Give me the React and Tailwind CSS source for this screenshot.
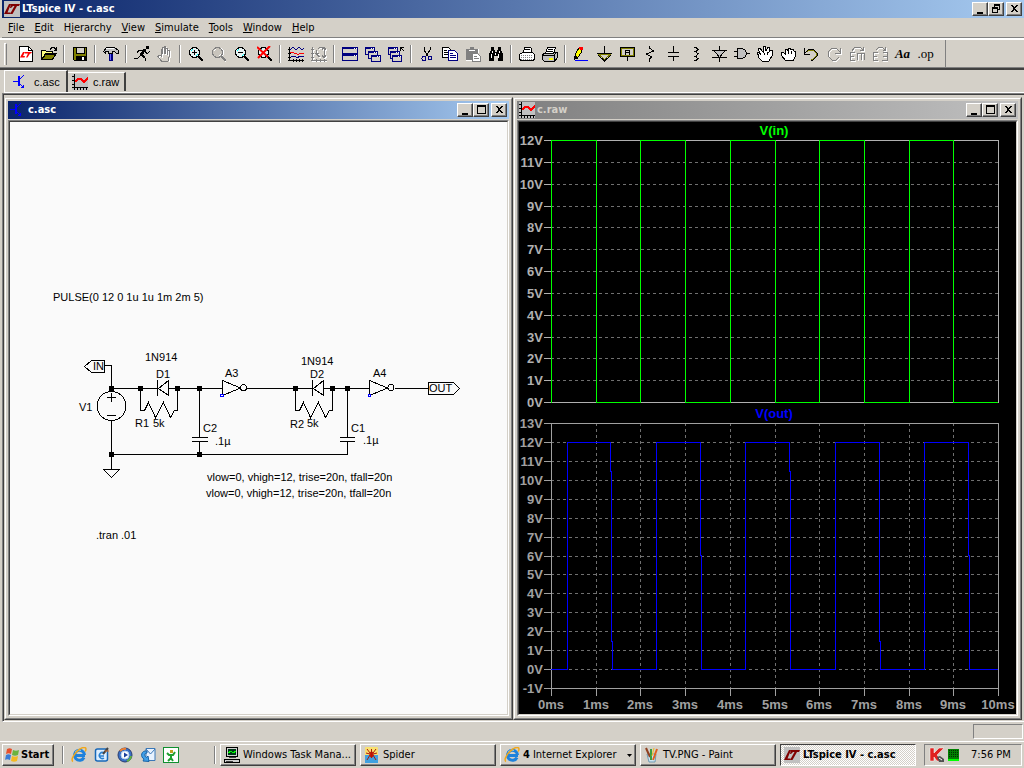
const raised =
  'border border-t-white border-l-white border-r-[#404040] border-b-[#404040] shadow-[inset_-1px_-1px_#808080]';

const Svg = ({ children, className = '' }) => (
  <svg viewBox="0 0 16 16" className={`w-4 h-4 shrink-0 ${className}`} fill="none" stroke="#000" shapeRendering="crispEdges" aria-hidden="true">
    {children}
  </svg>
);

// Greyed drawing with the white edge that disabled tools have
const Disabled = ({ d, fill = 'none' }) => (
  <Svg>
    <path d={d} stroke="#fff" fill={fill === 'none' ? 'none' : '#fff'} transform="translate(1 1)" />
    <path d={d} stroke="#808080" fill={fill} />
  </Svg>
);

const LogoIcon = () => (
  <Svg>
    <path d="M0 0h16v16H0z" fill="#c0c0c0" stroke="none" />
    <path d="M0 13L5 3h2L3.500 11.500h3L6 13zM7 3h9l-1 2h-2l-4.500 8H6l4.500-8H9l-2 2H6z" fill="#800000" stroke="none" shapeRendering="auto" />
  </Svg>
);

const SchematicIcon = () => (
  <Svg>
    <path d="M0 7.500h5M5 2v10M6 2v10M6 6l5-5M6 9l5 5" stroke="#00f" />
    <path d="M7 14h4v-4z" fill="#00f" stroke="none" />
  </Svg>
);

const WaveIcon = () => (
  <Svg>
    <path d="M0 0h16v16H0z" fill="#c0c0c0" stroke="none" />
    <path d="M2.500 0v16M0 13.500h16M0 2.500h3M0 6.500h3M0 10.500h3M5.500 13v3M8.500 13v3M11.500 13v3M14.500 13v3" />
    <path d="M3 8l3-3h3l3 3 4-4" stroke="#f00" strokeWidth="2" />
  </Svg>
);

const Lens = ({ children, dim }) => (
  <Svg>
    {dim && <path d="M5 2h5l2 2v5l-2 2 5 5" stroke="#fff" />}
    <circle cx="6.500" cy="6.500" r="5" stroke={dim ? '#808080' : '#000'} fill={dim ? '#c8c4bc' : '#e8f4f4'} />
    <path d="M3 5l2-2M8 10l2-2" stroke={dim ? '#fff' : '#0ff'} />
    <path d="M10 10l5 5" stroke={dim ? '#808080' : '#000'} strokeWidth="2" />
    {children}
  </Svg>
);

const Pane = ({ x, y, w = 9, h = 7 }) => (
  <g>
    <rect x={x + 0.5} y={y + 0.5} width={w} height={h} fill="#d4d0c8" stroke="#000080" />
    <path d={`M${x} ${y + 1}h${w + 1}`} stroke="#000080" strokeWidth="2" />
    <path d={`M${x + w - 3} ${y + 1.5}h1m1 0h1`} stroke="#fff" />
  </g>
);

const NewIcon = () => (
  <Svg>
    <path d="M1.500 .5h9l4 4v11h-13z" fill="#fff" />
    <path d="M10.500 .5v4h4" />
    <path d="M2 11.500L5 6h2l-2 4h2l-.5 1.500zM7 6h7l-1 1.500h-1L9.500 11.500H8l2-4H7z" fill="#f00" stroke="none" shapeRendering="auto" />
  </Svg>
);

const OpenIcon = () => (
  <Svg>
    <path d="M.5 13.500v-9h4l1 1h6v2M.5 13.500l4-6h11l-4 6z" fill="#ffff80" />
    <path d="M1 13.500l4-5.500h10l-4 5.500z" fill="#808000" />
    <path d="M9 3.500l2-2h2l2 2M15.500 1v3h-3" />
  </Svg>
);

const SaveIcon = () => (
  <Svg>
    <path d="M1.500 1.500h13v13h-12l-1-1z" fill="#808000" />
    <path d="M4.500 1.500h8v6h-8z" fill="#d4d0c8" />
    <path d="M4 10h9v4H4z" fill="#000" />
    <path d="M10 11h2v3h-2z" fill="#fff" stroke="none" />
  </Svg>
);

const HammerIcon = () => (
  <Svg>
    <path d="M.5 5.500l3-4h8l4 3v3h-2l-2-2h-2v2h-4v-2h-3v2z" fill="#c0c0c0" />
    <path d="M3 2.500h8" stroke="#fff" />
    <path d="M6 8h4v7H6z" fill="#000080" stroke="none" />
    <path d="M7.500 8v6" stroke="#66f" />
  </Svg>
);

const RunIcon = () => (
  <Svg>
    <path d="M12 0h3v3h-3z" fill="#000" stroke="none" />
    <path d="M11 3L7 9" strokeWidth="3" />
    <path d="M10 4H5L3 7M11 5l2 3 3-3M7 9l4 3v3M7 9l-3 3H0" />
    <path d="M8 9l3 3" strokeWidth="2" />
  </Svg>
);

const handPath = 'M4.500 15L1 10.500 2 9l2 1V3.500h1.500V8 1.500H7V8 .5h1.500V8 2h1.500v6.500V4h2v7L11 15z';
const StopIcon = () => <Disabled d={handPath} />;

const ZoomInIcon = () => <Lens><path d="M4 6.500h5M6.500 4v5" /></Lens>;
const ZoomPanIcon = () => <Lens dim />;
const ZoomOutIcon = () => <Lens><path d="M4 6.500h5" /></Lens>;
const ZoomFitIcon = () => (
  <Lens>
    <path d="M0 1l11 10M13 0L1 12" stroke="#f00" strokeWidth="2" shapeRendering="auto" />
  </Lens>
);

const PlotIcon = () => (
  <Svg>
    <path d="M1.500 1v14M0 14.500h16M0 3.500h3M0 7.500h3M0 11.500h3M5.500 13v3M8.500 13v3M11.500 13v3M14.500 13v3" />
    <path d="M2 4l3-3 3 3 3-3 3 3 2-2M3 10.500h4l2 1 3-1h4" stroke="#000080" />
    <path d="M2 6.500h4M6 7.500h3M9 8.500h2M11 7.500h5" stroke="#f00" />
  </Svg>
);
const AutoRangeIcon = () => <Disabled d="M1.500 1v13M0 14.500h16M0 3.500h3M0 7.500h3M0 11.500h3M5.500 13v3M9.500 13v3M13.500 13v3M7 2.500l2-1h4M5.500 4v4l3 3M13.500 1v11M11 4l2-3 2 3M11 9l2 3 2-3M4 7.500h4" />;

const TileIcon = () => (
  <Svg><Pane x={0} y={1} w={15} h={6} /><Pane x={0} y={8} w={15} h={6} /></Svg>
);
const CascadeIcon = () => (
  <Svg><Pane x={0} y={1} /><Pane x={3} y={5} /><Pane x={6} y={9} h={6} /></Svg>
);
const CloseAllIcon = () => (
  <Svg>
    <Pane x={0} y={1} /><Pane x={2} y={5} /><Pane x={4} y={9} h={6} />
    <path d="M12.500 5V1.500H16M12 1l4 4" />
  </Svg>
);

const CutIcon = () => (
  <Svg>
    <path d="M5 1v3l4 6M11 1v3l-4 6" />
    <circle cx="5" cy="12.500" r="2" stroke="#000080" />
    <circle cx="11" cy="12" r="2" stroke="#000080" />
  </Svg>
);
const CopyIcon = () => (
  <Svg>
    <path d="M.5 1.500h6l3 3v7h-9z" fill="#fff" />
    <path d="M2 4.500h3M2 6.500h5M2 8.500h5" />
    <path d="M6.500 4.500h6l3 3v7h-9z" fill="#fff" stroke="#000080" />
    <path d="M8 7.500h3M8 9.500h6M8 11.500h6" stroke="#000080" />
  </Svg>
);
const PasteIcon = () => (
  <Svg>
    <path d="M1 3h4V1h4v2h4v11H1z" fill="#808080" stroke="none" />
    <path d="M4 4.500h6M13.500 3v4M1 14.500h6" stroke="#fff" />
    <path d="M7.500 7.500h5l3 3v5h-8z" fill="#fff" stroke="#808080" />
    <path d="M9 10.500h3M9 12.500h5" stroke="#808080" />
  </Svg>
);
const FindIcon = () => (
  <Svg>
    <path d="M3 1h3v3h1v2h2V4h1V1h3v3l2 4v7h-5v-5H6v5H1V8l2-4z" fill="#000" stroke="none" />
    <path d="M4.500 5v2M3.500 8v4M11.500 5v2M10.500 8v4M7.500 7v2" stroke="#fff" />
  </Svg>
);
const PrintPreviewIcon = () => (
  <Svg>
    <path d="M4.500 6.500l1-5h6l1 1v4M5 3.500h6M.5 8.500l3-2h10l2 2v5l-2 1h-11l-2-1z" fill="#fff" />
    <path d="M2 9.500h12M2 11.500h12M2 13.500h12" stroke="#808080" strokeDasharray="1 1" />
  </Svg>
);
const PrintIcon = () => (
  <Svg>
    <path d="M.5 8.500l4-2h11v5l-3 4h-10l-2-2z" fill="#c0c0c0" />
    <path d="M3.500 7.500l2-6h8l-2 6z" fill="#fff" />
    <path d="M6 3.500h5M5 5.500h6M1 9.500h11v5M12 9l3-3" />
    <path d="M7 12h4v2H7z" fill="#ff0" stroke="none" />
  </Svg>
);

const WireIcon = () => (
  <Svg>
    <path d="M1.500 13l1-5 4-7h3l-1 5-4 6z" fill="#ff0" />
    <path d="M6 1h4v3H7z" fill="#f00" stroke="none" />
    <path d="M1 10v4l3-3z" fill="#000" />
    <path d="M2 14.500h13" stroke="#00f" />
  </Svg>
);
const GroundIcon = () => (
  <Svg>
    <path d="M8.500 0v8" />
    <path d="M3 8.500h11l-5.500 5z" stroke="#808000" fill="#d4d0c8" />
    <path d="M1 7.500h15M2 9l6.500 6L15 9" />
  </Svg>
);
const LabelIcon = () => (
  <Svg>
    <rect x="2.500" y="2.500" width="12" height="7" stroke="#808000" />
    <path d="M1.500 1.500h14v9h-14zM8.500 11v4M6.500 9V5l1-1h2l1 1v4M6 6.500h4" />
  </Svg>
);
const ResistorIcon = () => <Svg><path d="M7.500 0v2l4 3-7 3 5 3-2 2v3" /></Svg>;
const CapacitorIcon = () => <Svg><path d="M8.500 0v6M3 6.500h11M3 10.500h11M8.500 10v5" /></Svg>;
const InductorIcon = () => <Svg><path d="M6 1.500h2l2 2-2 2H7l3 2-2 3H7l3 2-2 2H6" /></Svg>;
const DiodeIcon = () => (
  <Svg>
    <path d="M3 4.500h11l-5.500 7z" fill="#c0c0c0" />
    <path d="M8.500 0v4M8.500 11v5M1 11.500h15M1 4.500h15" />
  </Svg>
);
const GateIcon = () => (
  <Svg>
    <path d="M3.500 2.500h5l3 2 1 3-1 3-3 2h-5z" fill="#c0c0c0" />
    <path d="M0 5.500h3M0 10.500h3M12 7.500h4" />
  </Svg>
);
const MoveIcon = () => (
  <Svg>
    <path d="M5 15L1 11V8H0V6h2l2 3-3-6 2-1 3 4V1l2-1 1 5 2-4 2 1-1 4 2-2 2 1-1 5-3 5z" fill="#fff" />
    <path d="M7 7v2M10 6v3" />
  </Svg>
);
const DragIcon = () => (
  <Svg>
    <path d="M5 14l-3-4-1-3 2-1 2 2V3h2l1 2V2h2l1 2 2-1 1 2 2 1-1 5-2 4z" fill="#fff" />
    <path d="M8 5v3M11 5v3" />
  </Svg>
);
const UndoIcon = () => (
  <Svg>
    <path d="M4 6l2-2h4l3 3v3l-3 3H8" stroke="#808000" />
    <path d="M1.500 2v6H7M2 7l4-4h4l4 4v3l-4 4H8" />
  </Svg>
);
const RedoIcon = () => <Disabled d="M14.500 2v5H9M14 6l-4-4H6L2 6v4l4 4h4l3-3" />;
const RotateIcon = () => <Disabled d="M1.500 14V6.500H6M1 10.500h4M1 14.500h5M8.500 14V7.500h7V14M12 8v6M3 5l3-4h5l3 3M14.500 1v3H11" />;
const MirrorIcon = () => <Disabled d="M1.500 15V6.500H6M1 10.500h4M1 14.500h5M15.500 15V6.500H11M15 10.500h-4M15 14.500h-5M4 4l3-3h3l3 3M13.500 1v3H11" />;

const tools = [
  [['New schematic', NewIcon], ['Open', OpenIcon]],
  [['Save', SaveIcon]],
  [['Control panel', HammerIcon]],
  [['Run', RunIcon], ['Halt', StopIcon]],
  [['Zoom in', ZoomInIcon], ['Pan', ZoomPanIcon], ['Zoom out', ZoomOutIcon], ['Zoom full', ZoomFitIcon]],
  [['Pick visible traces', PlotIcon], ['Autorange', AutoRangeIcon]],
  [['Tile windows', TileIcon], ['Cascade windows', CascadeIcon], ['Close all', CloseAllIcon]],
  [['Cut', CutIcon], ['Copy', CopyIcon], ['Paste', PasteIcon], ['Find', FindIcon]],
  [['Print setup', PrintPreviewIcon], ['Print', PrintIcon]],
  [
    ['Wire', WireIcon], ['Ground', GroundIcon], ['Label net', LabelIcon], ['Resistor', ResistorIcon],
    ['Capacitor', CapacitorIcon], ['Inductor', InductorIcon], ['Diode', DiodeIcon], ['Component', GateIcon],
    ['Move', MoveIcon], ['Drag', DragIcon], ['Undo', UndoIcon], ['Redo', RedoIcon], ['Rotate', RotateIcon],
    ['Mirror', MirrorIcon],
  ],
];

const menus = ['File', 'Edit', 'Hierarchy', 'View', 'Simulate', 'Tools', 'Window', 'Help'];
// Position of the underlined letter in each menu
const hotkeys = { Hierarchy: 1 };

const glyphs = {
  Minimize: <path d="M3 9h6v2H3z" fill="#000" />,
  Maximize: <path d="M2 1h9v9H2zM3 3v6h7V3z" fill="#000" fillRule="evenodd" />,
  Restore: <path d="M4 1h6v6H8v3H2V4h2zM5 3v1h3v2h1V3zM3 6v3h4V6z" fill="#000" fillRule="evenodd" />,
  Close: <path d="M3 2h2l1.500 2L8 2h2L7.500 5.500 10 9H8L6.500 7 5 9H3l2.500-3.500z" fill="#000" />,
};

const CaptionButtons = ({ middle }) => (
  <div className="flex shrink-0 mr-[2px]">
    {['Minimize', middle, 'Close'].map((name) => (
      <button
        key={name}
        aria-label={name}
        className={`w-4 h-[14px] bg-[#d4d0c8] flex items-center justify-center ${raised} ${name === 'Close' ? 'ml-[2px]' : ''}`}
      >
        <svg viewBox="0 0 13 12" className="w-[13px] h-3" shapeRendering="crispEdges" aria-hidden="true">{glyphs[name]}</svg>
      </button>
    ))}
  </div>
);

const Toolbar = () => (
  <div className="flex h-8 border-y-2 border-t-white border-b-[#404040] shadow-[inset_0_-1px_#808080]">
    <div className="flex items-center border-r border-[#808080] pr-2">
      <div className="w-[3px] h-[22px] ml-1 mr-[7px] border-t border-l border-white border-r border-r-[#808080]" />
      {tools.map((group, i) => (
        <div key={group[0][0]} className="flex items-center">
          {i > 0 && <div className="w-[2px] h-[18px] mx-[3px] border-l border-l-[#808080] border-r border-r-white" />}
          {group.map(([name, Icon]) => (
            <button key={name} aria-label={name} className="w-[23px] h-6 flex items-center justify-center">
              <Icon />
            </button>
          ))}
        </div>
      ))}
      <button className="w-[23px] h-6 font-['Liberation_Serif',serif] text-[13px] leading-6 font-bold italic">Aa</button>
      <button className="w-[23px] h-6 font-['Liberation_Serif',serif] text-[13px] leading-5">.op</button>
    </div>
  </div>
);

const ChildWindow = ({ title, icon, active, children }) => (
  <section className="flex-1 min-w-0 border border-[#d4d0c8] border-r-[#404040] border-b-[#404040]">
    <div className="border border-white border-r-[#808080] border-b-[#808080] p-[2px]">
      <header
        className={`flex items-center h-[18px] mb-px bg-linear-to-r/srgb ${
          active ? 'from-[#0a246a] to-[#a6caf0] text-white' : 'from-[#808080] to-[#c0c0c0] text-[#d4d0c8]'
        }`}
      >
        <span className="mx-[2px]">{icon}</span>
        <h2 className="flex-1 font-bold">{title}</h2>
        <CaptionButtons middle="Maximize" />
      </header>
      <div className="border border-[#808080] border-r-white border-b-white">
        <div className="border border-[#404040] border-r-[#d4d0c8] border-b-[#d4d0c8]">{children}</div>
      </div>
    </div>
  </section>
);

const labels = [
  [53, 301, 'PULSE(0 12 0 1u 1u 1m 2m 5)'],
  [145, 361, '1N914'], [156, 378, 'D1'], [225, 377, 'A3'], [135, 427, 'R1'], [153, 427, '5k'],
  [79, 411, 'V1'], [203, 432, 'C2'], [215, 445, '.1µ'], [93, 370, 'IN'],
  [301, 365, '1N914'], [310, 378, 'D2'], [373, 377, 'A4'], [290, 428, 'R2'], [307, 427, '5k'],
  [351, 432, 'C1'], [363, 444, '.1µ'], [429, 392, 'OUT'],
  [207, 481, 'vlow=0, vhigh=12, trise=20n, tfall=20n'],
  [206, 497, 'vlow=0, vhigh=12, trise=20n, tfall=20n'],
  [96, 539, '.tran .01'],
];
const junctions = [[111, 388], [140, 388], [177, 388], [199, 388], [111, 454], [199, 454], [295, 388], [332, 388], [347, 388]];

const Schematic = () => (
  <svg viewBox="10 122 497 592" className="block w-full h-auto bg-[#fafafa]" fill="none" stroke="#000" shapeRendering="crispEdges">
    {/* wires */}
    <path d="M105 365.500h6.500V391M111 388.500h47M169 388.500h53M247 388.500h66M324 388.500h45M395 388.500h33M111.500 421v48M111 454.500h237M199.500 388v49M199.500 442v12M347.500 388v49M347.500 442v12" />
    {/* source and ground */}
    <circle cx="111.500" cy="406" r="14.500" />
    <path d="M107 397.500h9M111.500 393v9M107 415.500h9M103.500 469.500h16l-8 8z" />
    {/* diodes */}
    <path d="M157.500 380v16M168.500 380.500v15l-10-7zM312.500 380v16M323.500 380.500v15l-10-7z" />
    {/* resistors */}
    <path d="M140.500 388v22.500h4l4-8 7 15 8-15 7 15 4-7h3V388M295.500 388v22.500h4l4-8 7 15 8-15 7 15 4-7h3V388" />
    {/* capacitors */}
    <path d="M192 437.500h16M192 441.500h16M340 437.500h15M340 441.500h15" />
    {/* inverters */}
    <path d="M222.500 380.500v15l18-7.500zM369.500 380.500v15l18-7.500z" />
    <circle cx="243.500" cy="387.500" r="3" />
    <circle cx="391" cy="387.500" r="3" />
    <path d="M220.500 394.500h3v2h-3zM368.500 394.500h2v2h-2z" stroke="#00f" fill="#fff" />
    {/* net flags */}
    <path d="M84.500 366.500l7-6h13v12h-13zM428.500 382.500h25l6 6-6 6h-25z" />
    {junctions.map(([x, y]) => <rect key={`${x}-${y}`} x={x - 2} y={y - 2} width="5" height="5" fill="#000" stroke="none" />)}
    <g fill="#000" stroke="none" className="font-['Liberation_Sans',sans-serif] text-[11px]">
      {labels.map(([x, y, text]) => <text key={`${x}-${y}`} x={x} y={y}>{text}</text>)}
    </g>
  </svg>
);

const gridX = [551, 596, 640, 685, 730, 775, 819, 864, 909, 953, 998];

const Axis = ({ top, bottom, max, min, color }) => {
  const ticks = [];
  for (let v = max; v >= min; v--) {
    ticks.push([v, Math.round(top + ((max - v) * (bottom - top)) / (max - min))]);
  }
  return (
    <g>
      {gridX.slice(1, -1).map((x) => <path key={x} d={`M${x + 0.5} ${top}V${bottom}`} stroke="#707070" strokeDasharray="3 3" />)}
      {ticks.map(([v, y]) => (
        <g key={v}>
          <path d={`M551 ${y + 0.5}H998`} stroke="#707070" strokeDasharray="3 3" />
          <path d={`M544 ${y + 0.5}h7`} stroke={color} />
          <text x="543" y={y + 5} textAnchor="end" fill={color} stroke="none">{v}V</text>
        </g>
      ))}
      <rect x="551.500" y={top + 0.5} width="447" height={bottom - top} stroke={color} />
    </g>
  );
};

const Waveforms = () => (
  <svg viewBox="519 122 497 592" className="block w-full h-auto bg-black font-['Liberation_Sans',sans-serif] text-[13px] font-bold" fill="none" shapeRendering="crispEdges">
    <Axis top={140} bottom={402} max={12} min={0} color="#b0b0b0" />
    <Axis top={423} bottom={688} max={13} min={-1} color="#a0a0a0" />
    {gridX.map((x, i) => (
      <g key={x}>
        <path d={`M${x + 0.5} 688v8`} stroke="#a0a0a0" />
        <text x={x} y="709" textAnchor="middle" fill="#a0a0a0">{i}ms</text>
      </g>
    ))}
    <text x="774" y="135" textAnchor="middle" fill="#0f0">V(in)</text>
    <text x="774" y="418" textAnchor="middle" fill="#00f">V(out)</text>
    <path
      d="M551.500 402.500V140.500H596.500V402.500H640.500V140.500H685.500V402.500H730.500V140.500H775.500V402.500H819.500V140.500H864.500V402.500H909.500V140.500H953.500V402.500H998"
      stroke="#0f0"
    />
    <path
      d="M551 669.500H567.500V442.500H610.500V471.500H611.500V641.500H612.500V669.500H656.500V442.500H700.500V555.500H701.500V669.500H745.500V442.500H789.500V471.500H790.500V669.500H835.500V442.500H879.500V641.500H880.500V669.500H924.500V442.500H968.500V555.500H969.500V669.500H998"
      stroke="#00f"
    />
  </svg>
);

const StartFlag = () => (
  <Svg className="[shape-rendering:auto]">
    <g stroke="none">
      <path d="M3 2c2-1 3-1 5 0L7 7c-2-1-3-1-5 0z" fill="#e8502c" />
      <path d="M9 3c2 1 4 1 6 0l-1 5c-2 1-4 1-6 0z" fill="#6cb33e" />
      <path d="M2 8c2-1 3-1 5 0l-1 5c-2-1-4-1-5 0z" fill="#3a7bd5" />
      <path d="M8 9c2 1 4 1 6 0l-1 5c-2 1-4 1-6 0z" fill="#f5b921" />
    </g>
  </Svg>
);

const ExplorerIcon = () => (
  <Svg className="[shape-rendering:auto]">
    <path d="M13 10.500A5 5 0 1 1 13.500 8M4 8.500h10" stroke="#1e82dc" strokeWidth="3" />
    <path d="M4 5a5 5 0 0 1 6-1.500" stroke="#7cc4f4" />
    <path d="M2 14.500C-1 13 4 5 9 2c3-2 6-2 6 0 0 1-.5 2-1 2.500" stroke="#f0a81c" strokeWidth="1.500" />
  </Svg>
);

const DesktopIcon = () => (
  <Svg className="[shape-rendering:auto]">
    <rect x="1.500" y="2" width="12" height="12" rx="2" fill="#dceeff" stroke="#1768b8" strokeWidth="1.500" />
    <path d="M10 6a3 3 0 1 0 0 5M5 9h5" stroke="#2a80d0" strokeWidth="1.500" />
    <path d="M9 7l5-6" stroke="#444" strokeWidth="2" />
    <path d="M11 4h4" stroke="#e07020" />
  </Svg>
);

const MediaIcon = () => (
  <Svg className="[shape-rendering:auto]">
    <circle cx="8" cy="8" r="7" fill="#3a6fc4" stroke="#283c70" />
    <path d="M3 4a6 6 0 0 1 6-2" stroke="#f08030" strokeWidth="2" />
    <path d="M10 14a6 6 0 0 0 4-5" stroke="#60b040" strokeWidth="2" />
    <circle cx="8" cy="8" r="4" fill="#fff" stroke="#b8d0f0" />
    <path d="M7 5.500v5L11 8z" fill="#1b3f9c" stroke="none" />
  </Svg>
);

const MailIcon = () => (
  <Svg className="[shape-rendering:auto]">
    <path d="M6 1.500h9v12H6z" fill="#e8f2ff" stroke="#3b78b8" />
    <path d="M6 2l4.500 5L15 2" stroke="#3b78b8" />
    <path d="M7 4C1 3 0 10 4 12l-1 2 6 .5L8 9 6.500 10.500C4 9 4 6 7 6z" fill="#40a0e8" stroke="#1864a8" />
  </Svg>
);

const GreenManIcon = () => (
  <Svg>
    <rect x=".5" y=".5" width="15" height="15" fill="#fff" stroke="#109030" />
    <path d="M4 6l2 2h4l2-3M8 8v4M8 11l-3 3M8 11l2 3" stroke="#20a030" strokeWidth="2" shapeRendering="auto" />
    <path d="M7 3h3v3H7z" fill="#c0a020" stroke="none" />
  </Svg>
);

const TaskManagerIcon = () => (
  <Svg>
    <path d="M2.500 .5h11v9h-11zM.5 12.500h15v3H.5z" fill="#d0d0d0" />
    <path d="M4 2h8v6H4z" fill="#003818" stroke="none" />
    <path d="M4 6l3-2 2 2 3-2" stroke="#0f0" />
    <path d="M5 10.500h7M2 14.500h7" stroke="#404040" />
  </Svg>
);

const SpiderIcon = () => (
  <Svg className="[shape-rendering:auto]">
    <rect x="1" y="0" width="13" height="16" rx="1" fill="#f8e070" stroke="none" />
    <path d="M1 8h13v8H1z" fill="#40a0e0" stroke="none" />
    <ellipse cx="7.500" cy="7.500" rx="2" ry="3" fill="#c81808" stroke="none" />
    <path d="M7.500 2v9M3 2l3 4M12 2L9 6M2 6l4 1M13 6L9 7M3 13l3-5M12 13L9 8" stroke="#b01808" />
  </Svg>
);

const PaintIcon = () => (
  <Svg className="[shape-rendering:auto]">
    <path d="M3 7h9l-1 8H5z" fill="#cde6f4" stroke="#709ab0" />
    <path d="M2 1l4 9" stroke="#904020" strokeWidth="2" />
    <path d="M7 2v11" stroke="#3c9c40" strokeWidth="2" />
    <path d="M13 2l-4 11" stroke="#e06020" strokeWidth="2" />
    <path d="M10 1L8 9" stroke="#f0c020" />
  </Svg>
);

const KasperskyIcon = () => (
  <Svg className="[shape-rendering:auto]">
    <path d="M1 1h4v5l5-5h5L8 8l5 6H8L5 10v4H1z" fill="#e02020" stroke="#fff" strokeWidth=".5" />
    <path d="M8 10l3-1 4 3v3h-5z" fill="#505050" stroke="none" />
    <path d="M10 11l3 2" stroke="#fff" />
  </Svg>
);

const CpuMeter = () => (
  <svg viewBox="0 0 11 12" className="w-[11px] h-3" shapeRendering="crispEdges" aria-hidden="true">
    <path d="M0 0h11v12H0z" fill="#008000" />
    <path d="M1 1.500h10M1 3.500h10M1 5.500h10M1 7.500h10" stroke="#003000" strokeDasharray="1 1" />
    <path d="M0 10h11v2H0z" fill="#0f0" />
  </svg>
);

const quickLaunch = [
  ['Internet Explorer', ExplorerIcon], ['Show desktop', DesktopIcon], ['Media Player', MediaIcon],
  ['Outlook', MailIcon], ['Messenger', GreenManIcon],
];
const tasks = [
  { title: 'Windows Task Mana...', Icon: TaskManagerIcon },
  { title: 'Spider', Icon: SpiderIcon },
  { title: 'Internet Explorer', count: 4, Icon: ExplorerIcon },
  { title: 'TV.PNG - Paint', Icon: PaintIcon },
  { title: 'LTspice IV - c.asc', Icon: LogoIcon, active: true },
];

const Divider = () => <div className="w-[2px] h-[18px] border-l border-l-[#808080] border-r border-r-white" />;

const Taskbar = () => (
  <footer className="flex items-center h-[27px] border-t border-white px-[2px]">
    <button className={`w-[52px] h-[22px] flex items-center gap-px pl-px font-bold ${raised}`}>
      <StartFlag />
      Start
    </button>
    <div className="flex items-center w-[166px] pl-2 pr-1">
      <Divider />
      <div className="flex flex-1 gap-[7px] ml-[7px]">
        {quickLaunch.map(([name, Icon]) => <button key={name} aria-label={name}><Icon /></button>)}
      </div>
      <Divider />
    </div>
    <div className="flex flex-1 min-w-0 gap-1">
      {tasks.map(({ title, count, Icon, active }) => (
        <button
          key={title}
          className={`flex flex-1 min-w-0 items-center gap-[3px] h-[22px] pl-[3px] pr-px text-left whitespace-nowrap ${
            active
              ? 'font-bold border border-t-[#404040] border-l-[#404040] border-r-white border-b-white bg-[repeating-conic-gradient(#fff_0_25%,#d4d0c8_0_50%)] bg-size-[2px_2px]'
              : raised
          }`}
        >
          <Icon />
          {count && <b>{count}</b>}
          <span className="flex-1">{title}</span>
          {count && <svg viewBox="0 0 5 3" className="w-[5px] h-[3px] mr-[2px]" aria-hidden="true"><path d="M0 0h5L2.500 3z" /></svg>}
        </button>
      ))}
    </div>
    <div className="flex items-center h-[22px] ml-2 w-[98px] pl-1 border border-[#808080] border-r-white border-b-white">
      <KasperskyIcon />
      <span className="ml-[3px] mr-3"><CpuMeter /></span>
      <time>7:56 PM</time>
    </div>
  </footer>
);

export default function App() {
  return (
    <div className="min-h-screen flex flex-col bg-[#d4d0c8] text-black text-[11px] leading-[14px] font-['DejaVu_Sans_Condensed','DejaVu_Sans',sans-serif]">
      <header className="flex items-center h-[18px] ml-[2px] pl-[2px] bg-linear-to-r/srgb from-[#0a246a] to-[#a6caf0] text-white">
        <LogoIcon />
        <h1 className="flex-1 ml-[2px] font-bold">LTspice IV - c.asc</h1>
        <CaptionButtons middle="Restore" />
      </header>

      <nav className="flex h-5 ml-[2px] pl-px border-b border-[#808080] items-center">
        {menus.map((name) => {
          const at = hotkeys[name] || 0;
          return (
            <button key={name} className="px-[5px]">
              {name.slice(0, at)}<u>{name[at]}</u>{name.slice(at + 1)}
            </button>
          );
        })}
      </nav>

      <Toolbar />

      <div role="tablist" className="flex h-[23px] items-start ml-1 border-b border-white font-['Liberation_Sans',sans-serif]">
        <button role="tab" aria-selected="true" className="flex items-center gap-[5px] h-[22px] w-16 pl-2 border-t border-l border-white border-r-2 border-r-[#404040]">
          <SchematicIcon />
          <span>c.asc</span>
        </button>
        <button role="tab" aria-selected="false" className="flex items-center gap-[5px] h-[19px] w-[58px] mt-[2px] pl-1 border-t border-white border-r-2 border-r-[#404040]">
          <WaveIcon />
          <span>c.raw</span>
        </button>
      </div>

      <main className="ml-[2px] border-t border-l border-[#808080] border-b border-b-white">
        <div className="flex pt-[2px] pr-[2px] pb-px border-t border-l border-[#404040]">
          <ChildWindow title="c.asc" icon={<SchematicIcon />} active>
            <Schematic />
          </ChildWindow>
          <ChildWindow title="c.raw" icon={<WaveIcon />}>
            <Waveforms />
          </ChildWindow>
        </div>
      </main>

      <div className="flex flex-1 min-h-[19px] justify-end py-[2px] pr-px">
        <div className="w-[50px] border border-[#808080] border-r-white border-b-white" />
      </div>

      <Taskbar />
    </div>
  );
}
